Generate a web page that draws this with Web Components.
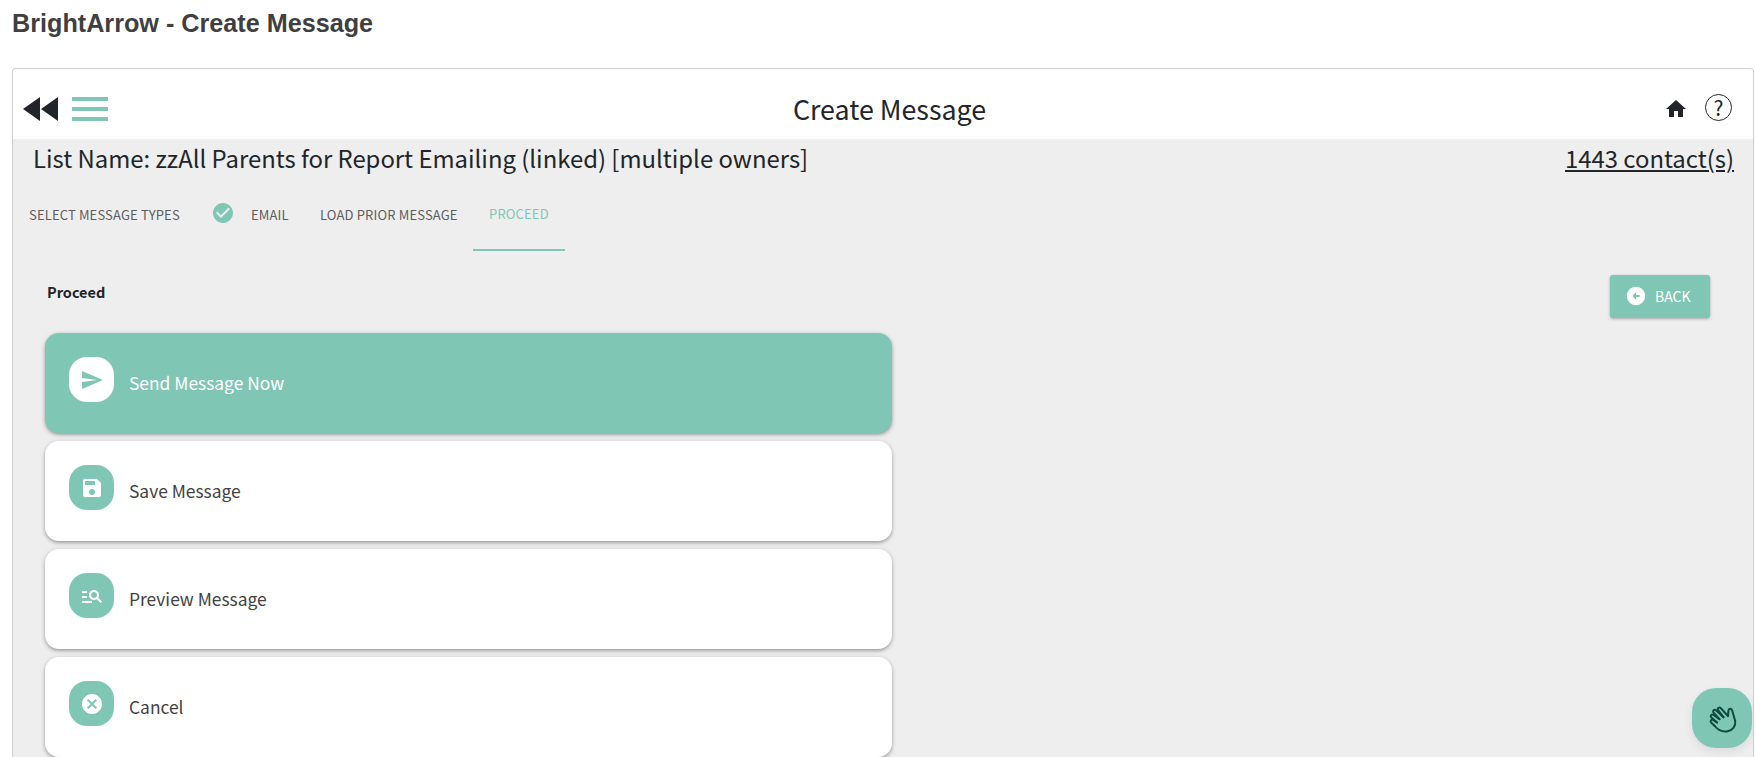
<!DOCTYPE html>
<html lang="en">
<head>
<meta charset="utf-8">
<title>BrightArrow - Create Message</title>
<style>
html, body { margin: 0; padding: 0; height: 757px; overflow: hidden; background: #fff; }
body { font-family: "Noto Sans CJK SC", "Noto Sans", sans-serif; color: #212529; }
</style>
</head>
<body>
<ba-title>BrightArrow - Create Message</ba-title>
<ba-panel>
  <ba-toolbar slot="toolbar" heading="Create Message"></ba-toolbar>
  <ba-list-header name="List Name: zzAll Parents for Report Emailing (linked) [multiple owners]" count="1443 contact(s)"></ba-list-header>
  <ba-stepper>
    <ba-step width="184">SELECT MESSAGE TYPES</ba-step>
    <ba-step width="107" done>EMAIL</ba-step>
    <ba-step width="169">LOAD PRIOR MESSAGE</ba-step>
    <ba-step width="92" active>PROCEED</ba-step>
  </ba-stepper>
  <ba-proceed>
    <ba-action-card icon="send" primary>Send Message Now</ba-action-card>
    <ba-action-card icon="save">Save Message</ba-action-card>
    <ba-action-card icon="preview">Preview Message</ba-action-card>
    <ba-action-card icon="cancel">Cancel</ba-action-card>
  </ba-proceed>
</ba-panel>
<ba-wave></ba-wave>

<script>
const GREEN = '#80c6b5'
const ICONS = {
  send: 'M2 21l21-9L2 3v7l15 2-15 2z',
  save: 'M17 3H5a2 2 0 0 0-2 2v14a2 2 0 0 0 2 2h14a2 2 0 0 0 2-2V7l-4-4zm-5 16a3 3 0 1 1 0-6 3 3 0 0 1 0 6zm3-10H5V5h10v4z',
  preview: 'M7 9H2V7h5v2zm0 3H2v2h5v-2zm13.59 7l-3.83-3.83c-.8.52-1.74.83-2.76.83-2.76 0-5-2.24-5-5s2.24-5 5-5 5 2.24 5 5c0 1.02-.31 1.96-.83 2.75L22 17.59 20.59 19zM17 11c0-1.65-1.35-3-3-3s-3 1.35-3 3 1.35 3 3 3 3-1.35 3-3zM2 19h10v-2H2v2z',
  cancel: 'M12 2C6.47 2 2 6.47 2 12s4.47 10 10 10 10-4.47 10-10S17.53 2 12 2zm5 13.59L15.59 17 12 13.41 8.41 17 7 15.59 10.59 12 7 8.41 8.41 7 12 10.59 15.59 7 17 8.41 13.41 12 17 15.59z',
  back: 'M2 12c0 5.52 4.48 10 10 10s10-4.48 10-10S17.52 2 12 2 2 6.48 2 12zm10-1h4v2h-4v3l-4-4 4-4v3z',
  check: 'M12 2C6.48 2 2 6.48 2 12s4.48 10 10 10 10-4.48 10-10S17.52 2 12 2zm-2 15l-5-5 1.41-1.41L10 14.17l7.59-7.59L19 8l-9 9z',
  home: 'M10 20v-6h4v6h5v-8h3L12 3 2 12h3v8z'
}

function svgIcon(name, size, fill) {
  return `<svg width="${size}" height="${size}" viewBox="0 0 24 24" fill="${fill}"><path d="${ICONS[name]}"/></svg>`
}

class BaTitle extends HTMLElement {
  constructor() {
    super()
    this.attachShadow({ mode: 'open' }).innerHTML = `
    <style>
    :host { display: block; height: 68px; box-sizing: border-box; padding: 9px 0 0 12px; }
    h1 { margin: 0; font: bold 25.2px/28px "Liberation Sans", Arial, sans-serif; color: #3f3f3f; }
    </style>
    <h1><slot></slot></h1>`
  }
}

class BaPanel extends HTMLElement {
  constructor() {
    super()
    this.attachShadow({ mode: 'open' }).innerHTML = `
    <style>
    :host { display: block; margin: 0 2px 0 12px; border: 1px solid #cfcfcf; border-bottom: 0; border-radius: 4px 4px 0 0; background: #eee; height: 689px; box-sizing: border-box; overflow: hidden; }
    </style>
    <slot name="toolbar"></slot>
    <slot></slot>`
  }
}

class BaToolbar extends HTMLElement {
  constructor() {
    super()
    this.attachShadow({ mode: 'open' }).innerHTML = `
    <style>
    :host { display: grid; grid-template-columns: 1fr auto 1fr; align-items: center; height: 70px; background: #fff; padding: 10px 21px 0 10px; box-sizing: border-box; }
    .left { display: flex; align-items: center; gap: 13px; }
    .right { display: flex; align-items: center; justify-content: flex-end; gap: 17px; }
    h2 { margin: 0 0 0 24px; font-weight: 400; font-size: 26.8px; line-height: 40px; color: #212529; }
    svg { display: block; }
    .help { width: 27px; height: 27px; margin-top: -3px; border: 1.5px solid #212529; border-radius: 50%; box-sizing: border-box; display: flex; align-items: center; justify-content: center; font-size: 21px; line-height: 1; color: #212529; }
    </style>
    <div class="left">
      <svg width="36" height="24" viewBox="0 0 36 24" fill="#212529"><path d="M0 12 17 0V24zM18 12 35 0V24z"/></svg>
      <svg width="36" height="24" viewBox="0 0 36 24" fill="${GREEN}"><rect width="36" height="4"/><rect y="10" width="36" height="4"/><rect y="20" width="36" height="4"/></svg>
    </div>
    <h2>${this.getAttribute('heading')}</h2>
    <div class="right">
      ${svgIcon('home', 24, '#212529')}
      <div class="help">?</div>
    </div>`
  }
}

class BaListHeader extends HTMLElement {
  constructor() {
    super()
    this.attachShadow({ mode: 'open' }).innerHTML = `
    <style>
    :host { display: flex; justify-content: space-between; align-items: center; box-sizing: border-box; height: 38px; padding: 0 19px 2px 20px; font-size: 23.86px; color: #212529; }
    a { color: inherit; text-decoration: underline; }
    </style>
    <span>${this.getAttribute('name')}</span>
    <a>${this.getAttribute('count')}</a>`
  }
}

class BaStepper extends HTMLElement {
  constructor() {
    super()
    this.attachShadow({ mode: 'open' }).innerHTML = `
    <style>
    :host { display: flex; align-items: stretch; height: 74px; }
    </style>
    <slot></slot>`
  }
}

class BaStep extends HTMLElement {
  constructor() {
    super()
    const active = this.hasAttribute('active')
    const done = this.hasAttribute('done')
    this.attachShadow({ mode: 'open' }).innerHTML = `
    <style>
    :host { display: flex; align-items: center; gap: 16px; box-sizing: border-box; width: ${this.getAttribute('width')}px; padding: 1px 0 0 16px; font-size: 13px; letter-spacing: .15px; color: ${active ? GREEN : '#5d5d5d'}; ${active ? `border-bottom: 2px solid ${GREEN};` : ''} }
    svg { display: block; margin: -3px 0 0 -2px; }
    </style>
    ${done ? svgIcon('check', 24, GREEN) : ''}<span><slot></slot></span>`
  }
}

class BaProceed extends HTMLElement {
  constructor() {
    super()
    this.attachShadow({ mode: 'open' }).innerHTML = `
    <style>
    :host { display: block; padding: 25px 0 0 32px; }
    .head { display: flex; justify-content: space-between; align-items: flex-start; height: 57px; padding-right: 43px; }
    .label { font-size: 14.5px; font-weight: 700; line-height: 22px; color: #212529; margin-left: 2px; margin-top: 5px; }
    .btn { display: flex; align-items: center; gap: 8px; width: 100px; height: 43px; box-sizing: border-box; padding: 0 0 2px 15px; margin-top: -1px; border-radius: 3px; background: ${GREEN}; color: #fff; font-size: 14px; box-shadow: 0 1px 3px rgba(0,0,0,.3); }
    .list { display: flex; flex-direction: column; gap: 8px; width: 847px; }
    svg { display: block; }
    </style>
    <div class="head">
      <div class="label">Proceed</div>
      <div class="btn">${svgIcon('back', 22, '#fff')}<span>BACK</span></div>
    </div>
    <div class="list"><slot></slot></div>`
  }
}

class BaActionCard extends HTMLElement {
  constructor() {
    super()
    const primary = this.hasAttribute('primary')
    this.attachShadow({ mode: 'open' }).innerHTML = `
    <style>
    :host { display: flex; align-items: center; gap: 15px; height: 100px; box-sizing: border-box; padding: 0 24px; border-radius: 14px; background: ${primary ? GREEN : '#fff'}; color: ${primary ? '#fff' : '#424242'}; font-size: 17.4px; box-shadow: 0 2px 4px -1px rgba(0,0,0,.35), 0 1px 5px rgba(0,0,0,.15); }
    .box { width: 45px; height: 45px; margin-top: -7px; border-radius: 18px; display: flex; align-items: center; justify-content: center; background: ${primary ? '#fff' : GREEN}; }
    span { display: block; margin-top: -2px; }
    </style>
    <div class="box">${svgIcon(this.getAttribute('icon'), 24, primary ? GREEN : '#fff')}</div>
    <span><slot></slot></span>`
  }
}

class BaWave extends HTMLElement {
  constructor() {
    super()
    this.attachShadow({ mode: 'open' }).innerHTML = `
    <style>
    :host { position: fixed; left: 1692px; top: 688px; width: 60px; height: 60px; border-radius: 40%; background: ${GREEN}; display: flex; align-items: center; justify-content: center; box-shadow: 0 4px 10px rgba(0,0,0,.08); }
    svg { display: block; }
    </style>
    <svg width="32" height="32" viewBox="0 0 32 32" fill="none" stroke="#0f4a3f" stroke-width="2" stroke-linecap="round" stroke-linejoin="round">
      <path d="M8.800 24c3 3.800 7.700 6 12.200 5.400 5.500-.8 9-5.400 8.200-10.400L26 8c-.5-2-3.200-1.700-3.500.3L22 14"/>
      <path d="M22 14 15 6.300c-1.500-1.600-4-.1-3 1.900l5.500 7"/>
      <path d="M17.500 15.200 10 8.200c-1.500-1.300-3.700.4-2.600 2.200l6.100 6.800"/>
      <path d="M13.500 17.200 7.300 12.800c-1.600-1-3.400 1-2.200 2.500l6 5.200"/>
      <path d="M11 20.500 7 18c-1.500-.9-3.200 1-2 2.400L8.800 24"/>
    </svg>`
  }
}

customElements.define('ba-title', BaTitle)
customElements.define('ba-panel', BaPanel)
customElements.define('ba-toolbar', BaToolbar)
customElements.define('ba-list-header', BaListHeader)
customElements.define('ba-stepper', BaStepper)
customElements.define('ba-step', BaStep)
customElements.define('ba-proceed', BaProceed)
customElements.define('ba-action-card', BaActionCard)
customElements.define('ba-wave', BaWave)
</script>
</body>
</html>
